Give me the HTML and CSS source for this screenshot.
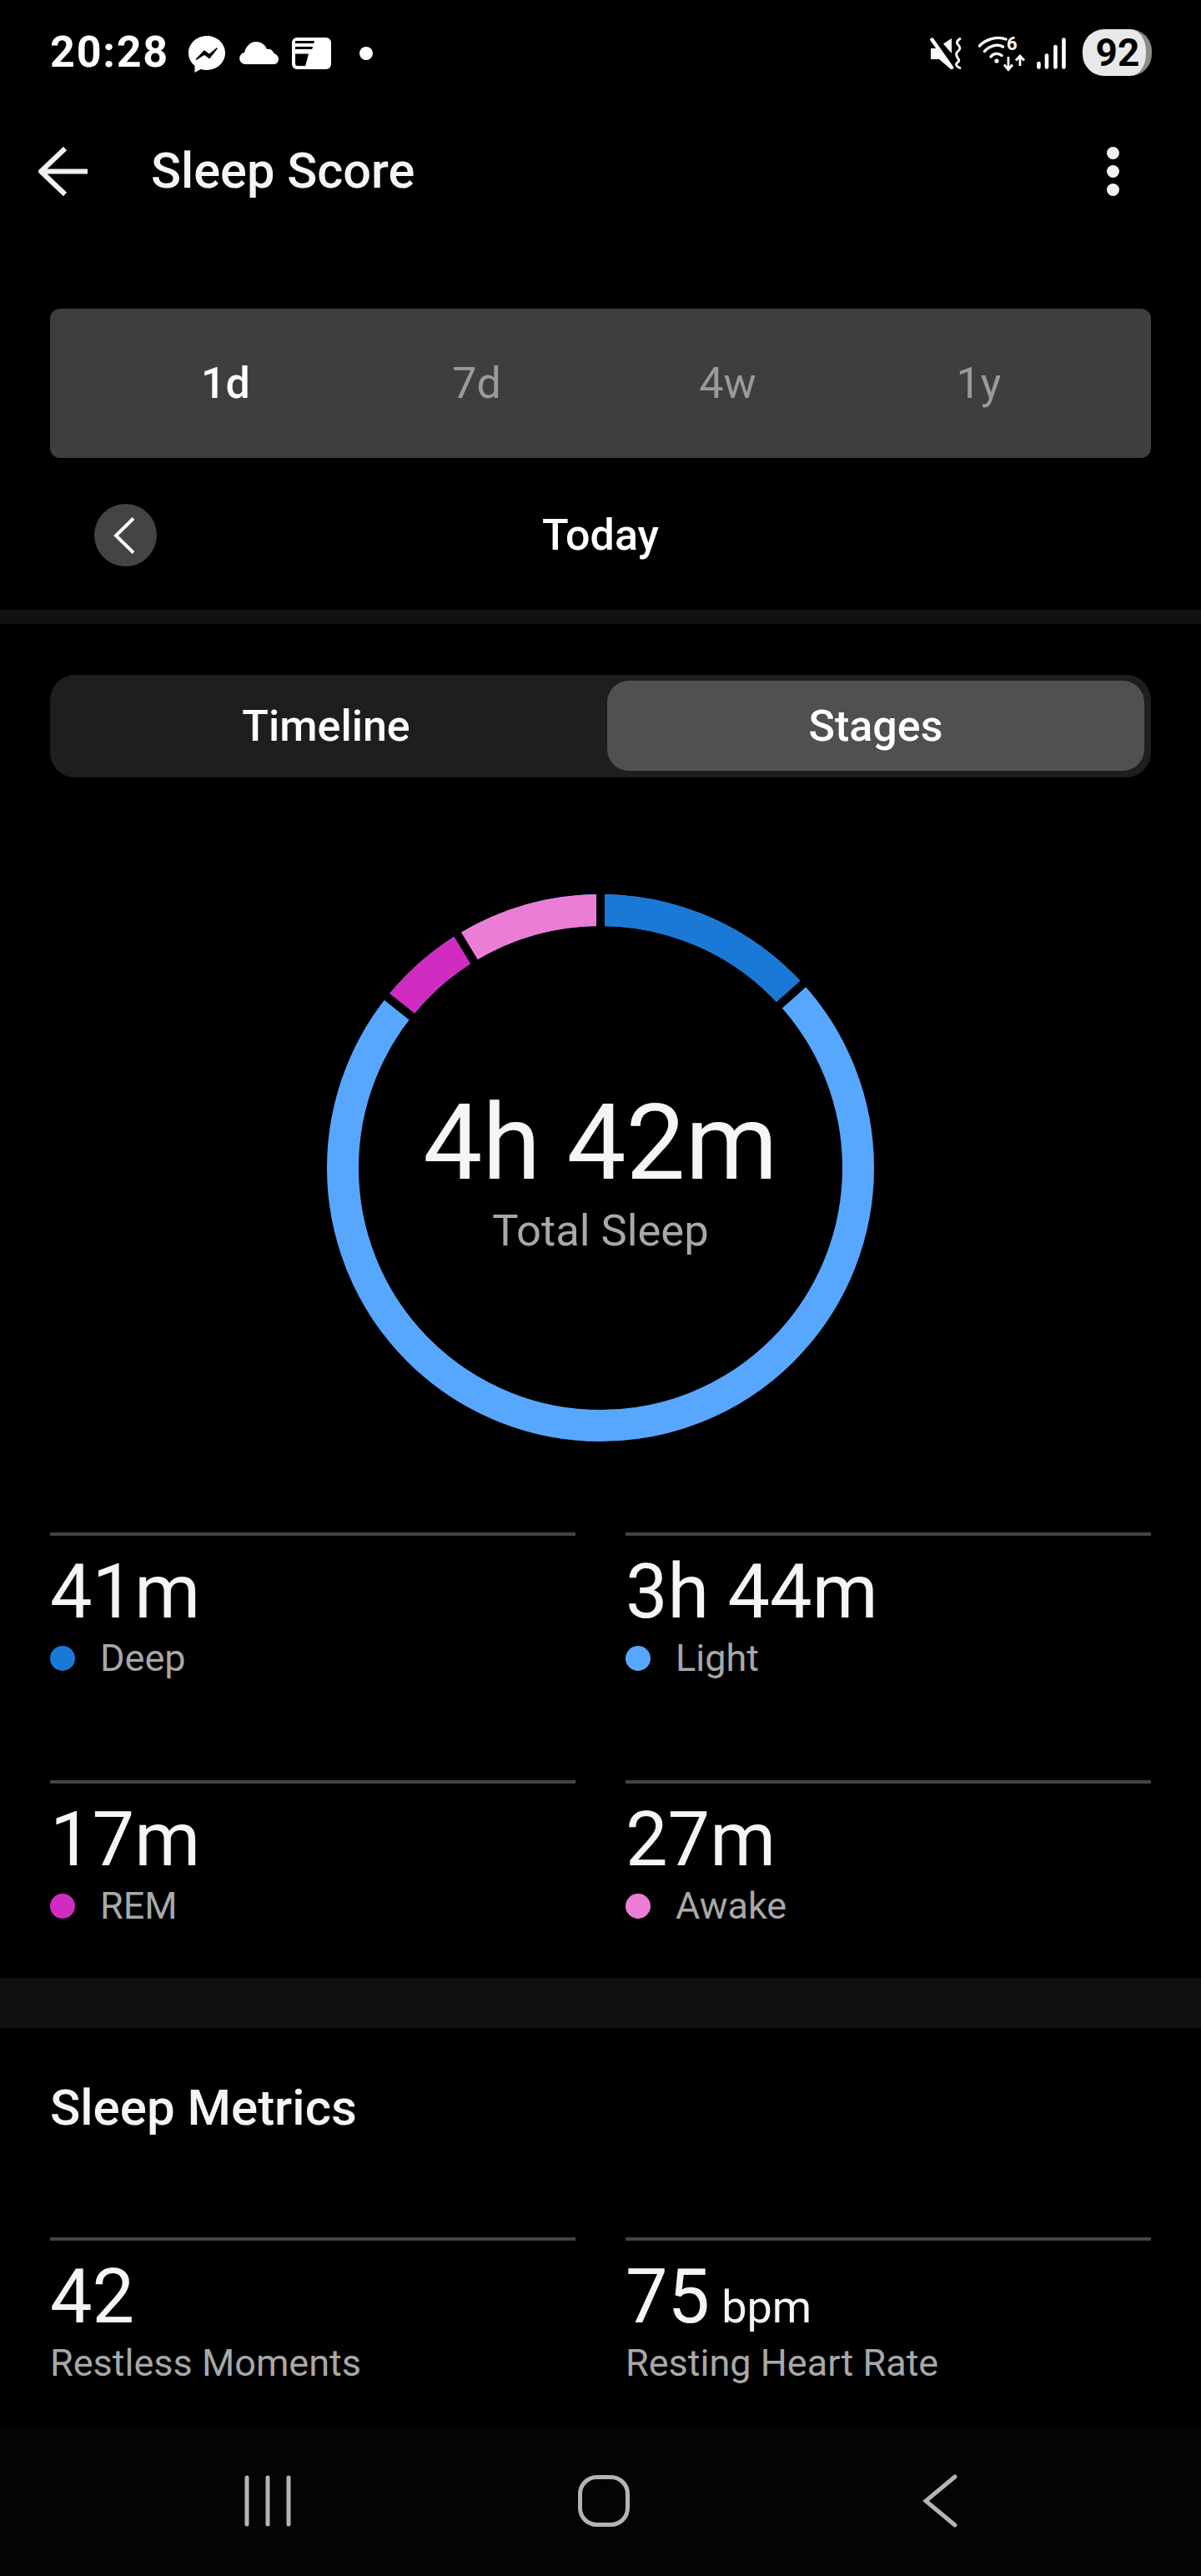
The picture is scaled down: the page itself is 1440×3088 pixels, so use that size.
FILE: index.html
```html
<!DOCTYPE html>
<html lang="en">
<head>
    <meta charset="UTF-8">
    <meta name="viewport" content="width=device-width, initial-scale=1.0">
    <title>Sleep Score</title>
    <link rel="stylesheet" href="styles.css">
</head>
<body>
    <div class="status-bar">
        <span class="clock">20:28</span>
        <svg class="icon-messenger" width="44" height="44" viewBox="0 0 44 44">
            <path d="M22 0C10 0 0 9 0 20.500c0 6.200 2.800 11.600 7.500 15.200V44l7.200-4c2.300.7 4.800 1 7.300 1 12 0 22-9 22-20.500S34 0 22 0z" fill="#fff"/>
            <path d="M9.500 28L19 18l6 4.500L34 15l-9 11.500-6-4.500z" fill="#000" stroke="#000" stroke-width="1.500" stroke-linejoin="round"/>
        </svg>
        <svg class="icon-cloud" width="47" height="27" viewBox="0 0 47 27">
            <path d="M7 27a7 7 0 0 1-1-13.900C7.500 6 13 0 20 0c6 0 11 3.500 13 9 3-.8 7 .7 8.500 5 3 1 5.500 3.500 5.500 7 0 3-2.500 6-5.500 6z" fill="#fff"/>
        </svg>
        <svg class="icon-note" width="47" height="38" viewBox="0 0 47 38">
            <rect width="47" height="38" rx="6" fill="#fff"/>
            <path d="M4 4h23l-.8 3H4zM4 11h21l-.8 3H4zM4 19.500h16L16.200 34H7a3 3 0 0 1-3-3z" fill="#000"/>
        </svg>
        <span class="status-dot"></span>
        <div class="status-right">
            <svg class="icon-mute" width="38" height="38" viewBox="0 0 38 38">
                <path d="M1 13h9l16 24-2 0-13-11H1z" fill="#fff"/>
                <path d="M26 1v18L16 7.500z" fill="#fff"/>
                <path d="M2.500 2.500L26 36" stroke="#fff" stroke-width="4.500" stroke-linecap="round"/>
                <path d="M36 1.500C31 5 32 7 34 9s3 4.500 0 7-3 5-1 8 3 4 0 6-1 5 3 6.500" fill="none" stroke="#fff" stroke-width="2.800" stroke-linecap="round"/>
            </svg>
            <svg class="icon-wifi" width="57" height="47" viewBox="0 -5 57 47">
                <path d="M1.500 11C8 4 22-1.500 33 3M7.500 17.500C13 11 23 8 29.500 12M15 24c3-4 9-5 13-1.500" fill="none" stroke="#fff" stroke-width="3.400" stroke-linecap="round"/>
                <circle cx="22" cy="29" r="2.600" fill="#fff"/>
                <text x="34" y="15.700" class="wifi-six">6</text>
                <path d="M36 24v15M31 33.500l5 6 5-6M50 35V23.500M45 28.500l5-5.500 5 5.500" fill="none" stroke="#fff" stroke-width="2.800"/>
            </svg>
            <svg class="icon-signal" width="35" height="38" viewBox="0 0 35 38">
                <path d="M2.500 31v4.500M12 21.500v14M22.500 11v24.500M32.500 2.500v33" stroke="#fff" stroke-width="4.600" stroke-linecap="round"/>
            </svg>
            <div class="battery"><span>92</span></div>
        </div>
    </div>

    <div class="top-bar">
        <svg class="back-arrow" width="59" height="59" viewBox="0 0 59 59">
            <path d="M32 2L3 29.500 32 57M3 29.500h56" fill="none" stroke="#f2f2f2" stroke-width="6"/>
        </svg>
        <h1 class="page-title">Sleep Score</h1>
        <div class="kebab"><span></span><span></span><span></span></div>
    </div>

    <div class="period">
        <div class="period-tabs">
            <span class="period-tab active">1d</span>
            <span class="period-tab">7d</span>
            <span class="period-tab">4w</span>
            <span class="period-tab">1y</span>
        </div>
        <div class="date-row">
            <div class="date-prev">
                <svg width="26" height="44" viewBox="0 0 26 44">
                    <path d="M25 1.500L4 22l21 20.500" fill="none" stroke="#fff" stroke-width="4"/>
                </svg>
            </div>
            <span class="date-label">Today</span>
        </div>
    </div>

    <div class="band band-thin"></div>

    <div class="stages">
        <div class="view-toggle">
            <span class="toggle-item">Timeline</span>
            <span class="toggle-item selected">Stages</span>
        </div>

        <div class="ring">
            <svg width="656" height="656" viewBox="0 0 656 656">
                <g class="ring-arcs" fill="none" stroke-width="38">
                    <circle class="arc-light" cx="328" cy="328" r="309"/>
                    <circle class="arc-deep" cx="328" cy="328" r="309" pathLength="309" stroke-dasharray="41 309"/>
                    <circle class="arc-rem" cx="328" cy="328" r="309" pathLength="309" stroke-dasharray="17 309" stroke-dashoffset="-265"/>
                    <circle class="arc-awake" cx="328" cy="328" r="309" pathLength="309" stroke-dasharray="27 309" stroke-dashoffset="-282"/>
                </g>
                <!-- gaps between the stages -->
                <path d="M328 -4V45M539 136L576 103M106 150L67 119M179 85L153 42" stroke="#000" stroke-width="10"/>
            </svg>
            <div class="ring-text">
                <div class="ring-value">4h 42m</div>
                <div class="ring-label">Total Sleep</div>
            </div>
        </div>

        <div class="stat-grid stage-grid">
            <div class="stat">
                <div class="stat-value">41m</div>
                <div class="stat-label"><span class="dot dot-deep"></span>Deep</div>
            </div>
            <div class="stat">
                <div class="stat-value">3h 44m</div>
                <div class="stat-label"><span class="dot dot-light"></span>Light</div>
            </div>
            <div class="stat">
                <div class="stat-value">17m</div>
                <div class="stat-label"><span class="dot dot-rem"></span>REM</div>
            </div>
            <div class="stat">
                <div class="stat-value">27m</div>
                <div class="stat-label"><span class="dot dot-awake"></span>Awake</div>
            </div>
        </div>
    </div>

    <div class="band"></div>

    <div class="metrics">
        <h2 class="metrics-title">Sleep Metrics</h2>
        <div class="stat-grid">
            <div class="stat">
                <div class="stat-value">42</div>
                <div class="stat-label">Restless Moments</div>
            </div>
            <div class="stat">
                <div class="stat-value">75<span class="unit">bpm</span></div>
                <div class="stat-label">Resting Heart Rate</div>
            </div>
        </div>
    </div>

    <div class="nav-bar">
        <svg width="100" height="64" viewBox="0 0 100 64">
            <path d="M25 4v56M50 4v56M75 4v56" stroke="#b4b4b4" stroke-width="5" stroke-linecap="round"/>
        </svg>
        <svg width="100" height="64" viewBox="0 0 100 64">
            <rect x="21.500" y="3.500" width="57" height="57" rx="20" fill="none" stroke="#b4b4b4" stroke-width="5"/>
        </svg>
        <svg width="100" height="64" viewBox="0 0 100 64">
            <path d="M68 3L33 32l35 29" fill="none" stroke="#b4b4b4" stroke-width="5" stroke-linecap="round"/>
        </svg>
    </div>
</body>
</html>
```

FILE: styles.css
```css
/* Sleep Score screen */
html, body {
    margin: 0;
    padding: 0;
}

body {
    width: 1440px;
    height: 3088px;
    overflow: hidden;
    background-color: #000000;
    color: #f5f5f5;
    font-family: 'Roboto', sans-serif;
}

h1, h2 {
    margin: 0;
    font-weight: 500;
}

/* status bar */
.status-bar {
    display: flex;
    align-items: center;
    height: 56px;
    padding: 35px 59px 35px 60px;
    color: #ffffff;
}

.clock {
    width: 140px;
    font-size: 52px;
    font-weight: 700;
    letter-spacing: 1.800px;
    line-height: 56px;
    white-space: nowrap;
}

.icon-messenger {
    margin-left: 26px;
    margin-top: 3px;
}

.icon-cloud {
    margin-left: 17px;
}

.icon-note {
    margin-left: 16px;
    margin-top: 2px;
}

.status-dot {
    width: 16px;
    height: 16px;
    margin-left: 34px;
    margin-top: 2px;
    border-radius: 50%;
    background-color: #ffffff;
}

.status-right {
    display: flex;
    align-items: center;
    margin-left: auto;
}

.icon-mute {
    margin-top: 2px;
}

.icon-wifi {
    margin-left: 20px;
    margin-bottom: 1px;
}

.wifi-six {
    font-family: 'Roboto', sans-serif;
    font-size: 22px;
    font-weight: 700;
    fill: #ffffff;
}

.icon-signal {
    margin-left: 13px;
    margin-top: 1px;
}

.battery {
    display: flex;
    align-items: center;
    justify-content: center;
    box-sizing: border-box;
    width: 83px;
    height: 56px;
    margin-left: 20px;
    padding-left: 8px;
    border-radius: 26px;
    border-right: 7px solid #8a8a8a;
    background-color: #e8e8e8;
    color: #000000;
    font-size: 46px;
    font-weight: 700;
}

/* top bar */
.top-bar {
    display: flex;
    align-items: center;
    height: 158px;
    padding: 0 98px 0 46px;
}

.page-title {
    margin-left: 76px;
    font-size: 59.500px;
}

.kebab {
    display: flex;
    flex-direction: column;
    gap: 7px;
    margin-left: auto;
}

.kebab span {
    width: 15px;
    height: 15px;
    border-radius: 50%;
    background-color: #f2f2f2;
}

/* period picker */
.period {
    padding: 86px 60px 52px;
}

.period-tabs {
    display: grid;
    grid-template-columns: repeat(4, 1fr);
    align-items: center;
    height: 179px;
    padding: 0 56px 0 60px;
    border-radius: 12px;
    background-color: #3e3e3e;
}

.period-tab {
    color: #9a9a9a;
    font-size: 52px;
    text-align: center;
}

.period-tab.active {
    color: #ffffff;
    font-weight: 500;
}

.date-row {
    display: grid;
    grid-template-columns: 1fr auto 1fr;
    align-items: center;
    margin-top: 55px;
}

.date-prev {
    display: flex;
    align-items: center;
    justify-content: center;
    width: 75px;
    height: 75px;
    margin-left: 53px;
    border-radius: 50%;
    background-color: #444444;
}

.date-prev svg {
    margin-right: 5px;
}

.date-label {
    color: #ffffff;
    font-size: 52px;
    font-weight: 500;
}

.band {
    height: 60px;
    background-color: #111111;
}

.band-thin {
    height: 17px;
}

/* stages */
.stages {
    padding: 61px 60px 0;
    height: 1623px;
    box-sizing: border-box;
}

.view-toggle {
    display: grid;
    grid-template-columns: 668px 1fr;
    box-sizing: border-box;
    height: 123px;
    padding: 7px 8px 8px 0;
    border-radius: 30px;
    background-color: #1e1e1e;
}

.toggle-item {
    display: flex;
    align-items: center;
    justify-content: center;
    padding-right: 6px;
    color: #ffffff;
    font-size: 52px;
    font-weight: 500;
}

.toggle-item.selected {
    padding-right: 0;
    border-radius: 26px;
    background-color: #505050;
}

.ring {
    display: grid;
    justify-content: center;
    margin-top: 140px;
}

.ring svg,
.ring-text {
    grid-area: 1 / 1;
}

.ring svg {
    display: block;
}

.ring-arcs circle {
    transform: rotate(-90deg);
    transform-origin: 328px 328px;
}

.arc-light {
    stroke: #57a7ff;
}

.arc-deep {
    stroke: #1a78d6;
}

.arc-rem {
    stroke: #d02cc2;
}

.arc-awake {
    stroke: #ec7dd6;
}

.ring-text {
    padding-top: 233px;
    text-align: center;
}

.ring-value {
    font-size: 126.500px;
    line-height: 130px;
}

.ring-label {
    margin-top: 10px;
    color: #a8a8a8;
    font-size: 52.500px;
    line-height: 60px;
}

/* stat tiles */
.stat-grid {
    display: grid;
    grid-template-columns: 630px 630px;
    column-gap: 60px;
    row-gap: 60px;
}

.stage-grid {
    margin-top: 109px;
}

.stat {
    height: 237px;
    box-sizing: border-box;
    padding-top: 28px;
    border-top: 4px solid #444444;
}

.stat-value {
    font-size: 90px;
    line-height: 80px;
}

.unit {
    margin-left: 14px;
    font-size: 54px;
    line-height: 1;
}

.stat-label {
    display: flex;
    align-items: center;
    margin-top: 14px;
    color: #a8a8a8;
    font-size: 45px;
    line-height: 50px;
}

.dot {
    width: 30px;
    height: 30px;
    margin-right: 30px;
    border-radius: 50%;
}

.dot-deep {
    background-color: #1a78d6;
}

.dot-light {
    background-color: #57a7ff;
}

.dot-rem {
    background-color: #d02cc2;
}

.dot-awake {
    background-color: #ec7dd6;
}

/* sleep metrics */
.metrics {
    box-sizing: border-box;
    height: 477px;
    padding: 64px 60px 0;
}

.metrics-title {
    height: 187px;
    font-size: 60px;
    line-height: 64px;
}

/* nav bar */
.nav-bar {
    display: flex;
    align-items: center;
    gap: 303px;
    height: 180px;
    padding-left: 271px;
    background-color: #040404;
}
```
